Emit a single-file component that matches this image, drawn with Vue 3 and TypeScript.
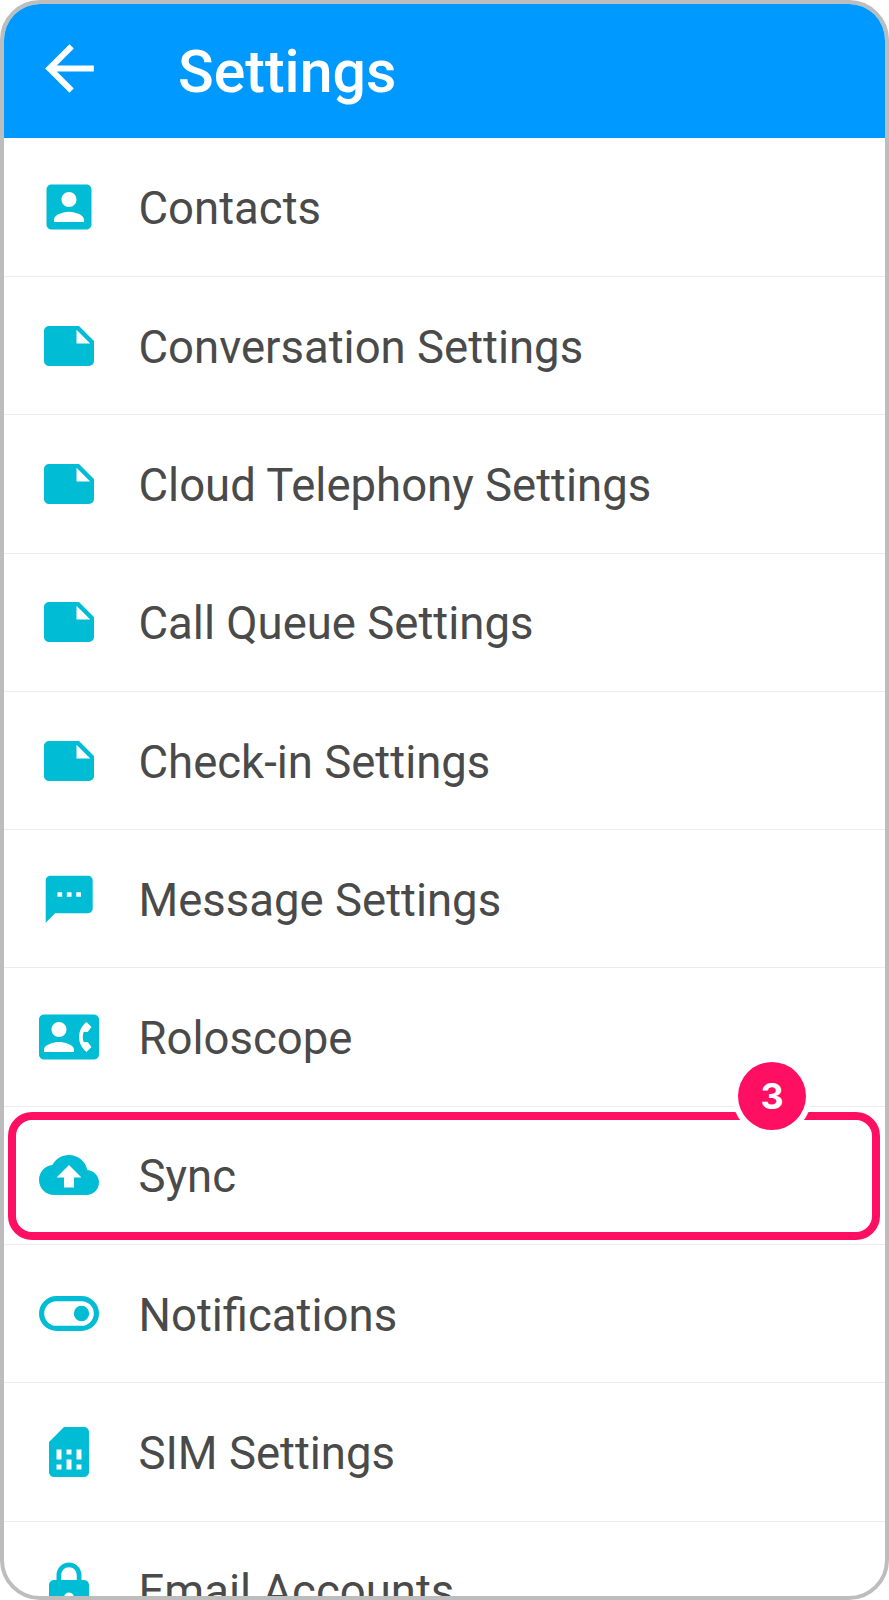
<script setup lang="ts">
interface Row {
  label: string
  path?: string
  size?: number
  highlight?: boolean
  toggle?: boolean
}

const note = 'M22 10l-6-6H4c-1.1 0-2 .9-2 2v12.01c0 1.1.9 1.99 2 1.99l16-.01c1.1 0 2-.89 2-1.99v-8zm-7-4.5l5.5 5.5H15V5.5z'

const rows: Row[] = [
  { label: 'Contacts', path: 'M3 5v14c0 1.1.89 2 2 2h14c1.1 0 2-.9 2-2V5c0-1.1-.9-2-2-2H5c-1.11 0-2 .9-2 2zm12 4c0 1.66-1.34 3-3 3s-3-1.34-3-3 1.34-3 3-3 3 1.34 3 3zm-9 8c0-2 4-3.1 6-3.1s6 1.1 6 3.1v1H6v-1z' },
  { label: 'Conversation Settings', path: note },
  { label: 'Cloud Telephony Settings', path: note },
  { label: 'Call Queue Settings', path: note },
  { label: 'Check-in Settings', path: note },
  { label: 'Message Settings', size: 56.4, path: 'M20 2H4c-1.1 0-1.99.9-1.99 2L2 22l4-4h14c1.1 0 2-.9 2-2V4c0-1.1-.9-2-2-2zM9 11H7V9h2v2zm4 0h-2V9h2v2zm4 0h-2V9h2v2z' },
  { label: 'Roloscope', path: 'M22 3H2C.9 3 0 3.9 0 5v14c0 1.1.9 2 2 2h20c1.1 0 1.99-.9 1.99-2L24 5c0-1.1-.9-2-2-2zM8 6c1.66 0 3 1.34 3 3s-1.34 3-3 3-3-1.34-3-3 1.34-3 3-3zm6 12H2v-1c0-2 4-3 6-3s6 1 6 3v1zm3.85-4h1.64L21 16l-1.99 1.99c-1.31-.98-2.28-2.38-2.73-3.99-.18-.64-.28-1.31-.28-2s.1-1.36.28-2c.45-1.62 1.42-3.01 2.73-3.99L21 8l-1.51 2h-1.64c-.22.63-.35 1.3-.35 2s.13 1.37.35 2z' },
  { label: 'Sync', highlight: true, path: 'M19.35 10.04C18.67 6.59 15.64 4 12 4 9.11 4 6.54 5.64 5.35 8.04 2.34 8.36 0 10.91 0 14c0 3.31 2.69 6 6 6h13c2.76 0 5-2.24 5-5 0-2.64-2.05-4.78-4.65-4.96zM14 13v4h-4v-4H7l5-5 5 5h-3z' },
  { label: 'Notifications', toggle: true },
  { label: 'SIM Settings', path: 'M19.99 4c0-1.1-.89-2-1.99-2h-8L4 8v12c0 1.1.9 2 2 2h12c1.1 0 2-.9 2-2l-.01-16zM9 19H7v-2h2v2zm8 0h-2v-2h2v2zm-8-4H7v-4h2v4zm4 4h-2v-4h2v4zm0-6h-2v-2h2v2zm4 2h-2v-4h2v4z' },
  { label: 'Email Accounts', path: 'M18 8h-1V6c0-2.76-2.24-5-5-5S7 3.24 7 6v2H6c-1.1 0-2 .9-2 2v10c0 1.1.9 2 2 2h12c1.1 0 2-.9 2-2V10c0-1.1-.9-2-2-2zm-6 9c-1.1 0-2-.9-2-2s.9-2 2-2 2 .9 2 2-.9 2-2 2zm3.1-9H8.9V6c0-1.71 1.39-3.1 3.1-3.1 1.71 0 3.1 1.39 3.1 3.1v2z' },
]
</script>

<template>
  <div class="frame">
    <header class="app-bar">
      <svg class="back" viewBox="0 0 24 24" width="73" height="73">
        <path d="M20 11H7.83l5.59-5.59L12 4l-8 8 8 8 1.41-1.41L7.83 13H20v-2z" />
      </svg>
      <h1 class="title">Settings</h1>
    </header>
    <ul class="list">
      <li v-for="row in rows" :key="row.label" class="row">
        <span class="icon-slot">
          <svg v-if="row.toggle" viewBox="0 0 60 35" width="60" height="35">
            <rect class="toggle-track" x="2.6" y="2.6" width="54.8" height="29.8" rx="14.9" />
            <circle class="icon-fill" cx="42.5" cy="17.5" r="7.7" />
          </svg>
          <svg v-else viewBox="0 0 24 24" :width="row.size ?? 60" :height="row.size ?? 60">
            <path class="icon-fill" :d="row.path" />
          </svg>
        </span>
        <span class="label">{{ row.label }}</span>
        <div v-if="row.highlight" class="callout">
          <span class="badge">3</span>
        </div>
      </li>
    </ul>
  </div>
</template>

<style scoped>
.frame {
  box-sizing: border-box;
  width: 889px;
  height: 1600px;
  border: 4px solid #bdbdbd;
  border-radius: 40px;
  overflow: hidden;
  background: #fff;
  font-family: Roboto, sans-serif;
}

.app-bar {
  display: flex;
  align-items: center;
  box-sizing: border-box;
  height: 134px;
  padding-left: 29px;
  background: #0099ff;
  color: #fff;
}

.back {
  flex: none;
  margin-bottom: 5px;
  fill: #fff;
}

.title {
  margin: 0 0 0 72px;
  font-size: 59px;
  font-weight: 500;
  line-height: 1;
}

.list {
  margin: 0;
  padding: 0.7px 0 0;
  list-style: none;
}

.row {
  position: relative;
  display: flex;
  align-items: center;
  box-sizing: border-box;
  height: 138.3px;
  padding-left: 35.2px;
  border-bottom: 1px solid #ececec;
}

.icon-slot {
  display: flex;
  flex: none;
  align-items: center;
  justify-content: center;
  width: 60px;
  height: 60px;
}

.icon-fill {
  fill: #00bcd4;
}

.toggle-track {
  fill: none;
  stroke: #00bcd4;
  stroke-width: 5.2;
}

.label {
  margin: 3px 0 0 39.3px;
  font-size: 45.5px;
  color: #4a4a4a;
}

.callout {
  position: absolute;
  top: 5px;
  left: 4px;
  right: 5px;
  box-sizing: border-box;
  height: 128px;
  border: 8px solid #ff0f62;
  border-radius: 24px;
}

.badge {
  position: absolute;
  top: -58px;
  right: 66px;
  display: flex;
  align-items: center;
  justify-content: center;
  width: 68px;
  height: 68px;
  border-radius: 50%;
  background: #ff0f62;
  box-shadow: 0 0 0 6px #fff;
  color: #fff;
  font-family: Inter, sans-serif;
  font-size: 36px;
  font-weight: 700;
}
</style>
